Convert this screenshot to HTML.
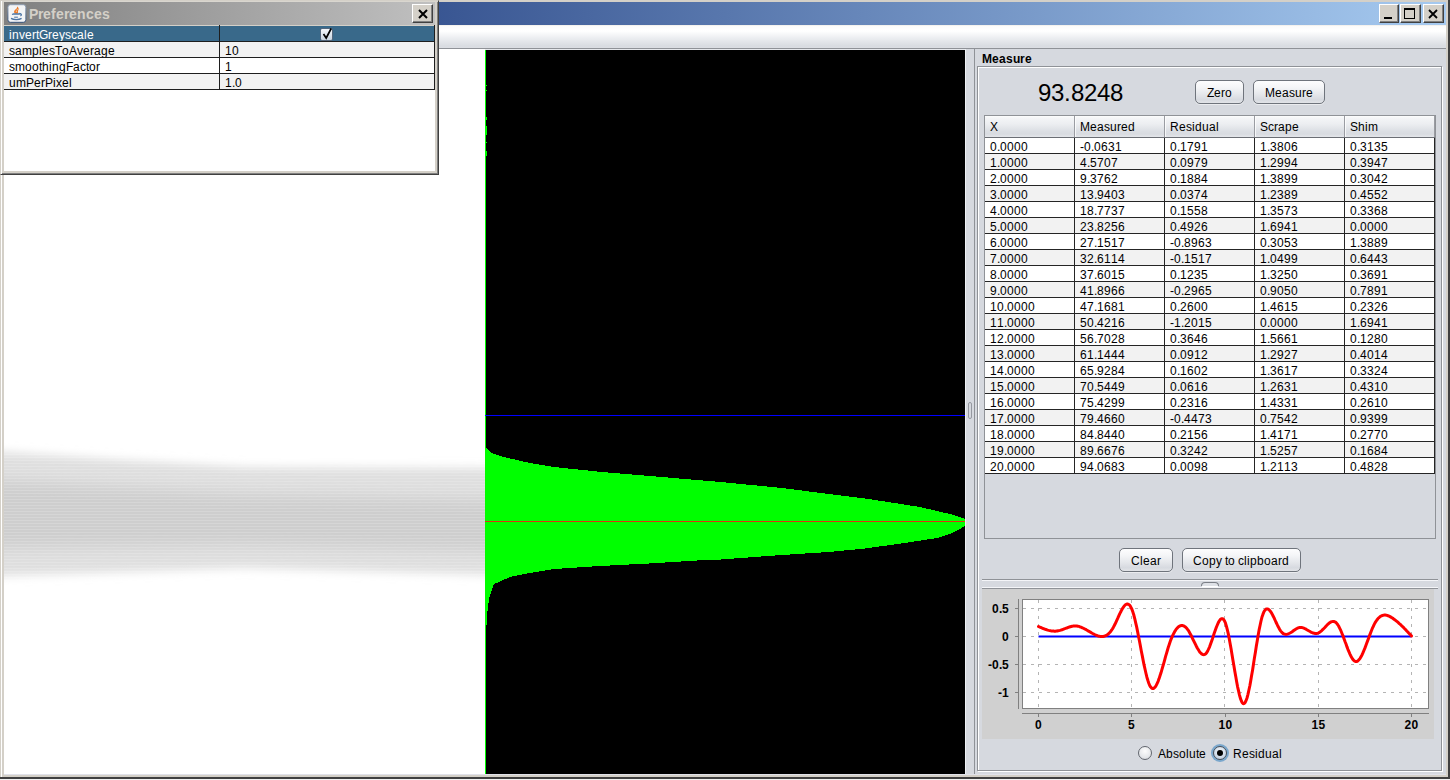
<!DOCTYPE html>
<html><head><meta charset="utf-8">
<style>
*{box-sizing:border-box;margin:0;padding:0}
html,body{width:1450px;height:780px;overflow:hidden}
body{position:relative;background:#d4d0c8;font-family:"Liberation Sans",sans-serif;font-size:12px;color:#000}
.a{position:absolute}
/* main window */
#mtitle{left:4px;top:2px;width:1442px;height:23px;background:linear-gradient(to right,#0a246a,#a6caf0)}
.wbtn{position:absolute;top:2px;width:16px;height:19px;background:#d4d0c8;border-top:1px solid #fff;border-left:1px solid #fff;border-right:1px solid #404040;border-bottom:1px solid #404040;box-shadow:inset -1px -1px 0 #808080}
#menubar{left:4px;top:25px;width:1442px;height:24px;background:linear-gradient(to bottom,#ece8e1 0px,#fbfbfb 1px,#ffffff 6px,#eceef1 13px,#d9dce1 21px,#dcdee3 23px);border-bottom:1px solid #8f9297}
#leftimg{left:4px;top:49px;width:481px;height:725px;background:#fff;overflow:hidden}
#blackp{left:485px;top:50px;width:480px;height:724px;background:#000;overflow:hidden}
#split{left:965px;top:49px;width:10px;height:725px;background:#d6d9df;border-left:1px solid #eef0f4;border-right:1px solid #8f9297}
#rightp{left:975px;top:49px;width:471px;height:725px;background:#d6d9df}
.tb{position:absolute;white-space:nowrap}
/* nimbus button */
.btn{position:absolute;border:1px solid #6f747c;border-radius:5px;background:linear-gradient(to bottom,#fdfdfe 0%,#f4f5f7 30%,#e6e8ec 58%,#d7dae0 85%,#e2e4e8 100%);text-align:center;font-size:12px;color:#000;box-shadow:0 1px 0 rgba(255,255,255,.5)}
/* table */
.tr{position:absolute;left:985px;width:449px;height:16px;border-bottom:1px solid #252525}
.tr span{position:absolute;top:1px;line-height:13px;font-size:12px}
.hdr span{position:absolute;top:4px;font-size:12px}
/* prefs */
#dlg{left:0;top:0;width:439px;height:175px;background:#d4d0c8;border-top:1px solid #d4d0c8;border-left:1px solid #d4d0c8;border-right:1px solid #404040;border-bottom:1px solid #404040;box-shadow:inset 1px 0 0 #fff,inset 0 1px 0 #d9d6cf,inset -1px -1px 0 #808080}
.prow{position:absolute;left:4px;width:431px;height:16px;border-bottom:1px solid #1e1e1e;font-size:12px}
.prow span{position:absolute;top:1px;line-height:13px}
</style></head>
<body>
<!-- main window frame -->
<div class="a" style="left:0;top:0;width:1450px;height:780px;background:#d4d0c8"></div>
<div class="a" style="left:1px;top:1px;width:1px;height:777px;background:#fff"></div>
<div class="a" style="left:1448px;top:0;width:2px;height:780px;background:#404040"></div>
<div class="a" style="left:0;top:777px;width:1450px;height:2px;background:#404040"></div>
<div class="a" style="left:0;top:779px;width:1450px;height:1px;background:#f0f0f0"></div>
<div id="mtitle" class="a">
  <div class="wbtn" style="left:1375px;width:20px"><div class="a" style="left:4px;top:12px;width:8px;height:2px;background:#000"></div></div>
  <div class="wbtn" style="left:1396px;width:21px"><div class="a" style="left:3px;top:3px;width:11px;height:11px;border:1px solid #000;border-top-width:2px"></div></div>
  <div class="wbtn" style="left:1419px;width:21px"><svg class="a" style="left:4px;top:4px" width="10" height="10" viewBox="0 0 10 10"><path d="M1 1L9 9M9 1L1 9" stroke="#000" stroke-width="1.8"/></svg></div>
</div>
<div id="menubar" class="a"></div>

<!-- left image -->
<div id="leftimg" class="a"><svg class="a" style="left:0;top:0" width="481" height="725"><defs><filter id="bl1" x="-20%" y="-50%" width="140%" height="200%"><feGaussianBlur stdDeviation="5"/></filter><filter id="bl2" x="-20%" y="-50%" width="140%" height="200%"><feGaussianBlur stdDeviation="8"/></filter><pattern id="stp" width="8" height="3" patternUnits="userSpaceOnUse"><rect width="8" height="1" fill="#fff" fill-opacity=".16"/></pattern></defs><polygon points="-40,401 0,403 120,411 240,418 520,419 520,527 240,519 0,527 -40,529" fill="#dfdfdf" filter="url(#bl1)"/><polygon points="-40,429 0,431 240,445 520,451 520,503 240,496 0,499 -40,501" fill="#cecece" filter="url(#bl2)"/><rect x="0" y="403" width="481" height="140" fill="url(#stp)"/></svg></div>

<!-- black profile panel -->
<div id="blackp" class="a">
  <svg class="a" style="left:0;top:0" width="480" height="724" viewBox="485 50 480 724">
    <polygon points="485,446 487,449 492,453 500,456 508,458 530,463 554,467 602,472 650,476 697,480 721,482 782,488 829,494 865,498.5 885,501.5 901,504 920,507 937,511 950,514 960,517 965,519 966,521 966,522 965,526 960,529 950,534 937,538 901,543.5 865,548.5 829,552 782,555 721,559.5 697,560.5 649,563.5 600,566 554,569 524,574 510,577 499,582 494,584 491,592 489,599 487.5,611 486.5,625 486,640 485,650 485,774" fill="#00ff00" shape-rendering="crispEdges"/><g fill="#00ff00"><rect x="486" y="85" width="1" height="1"/><rect x="486" y="90" width="1" height="1"/><rect x="486" y="117" width="1" height="3"/><rect x="486" y="126" width="1" height="9"/><rect x="486" y="142" width="1" height="1"/><rect x="486" y="151" width="1" height="5"/></g>
    <rect x="485" y="50" width="1" height="724" fill="#00ff00"/>
    <rect x="485" y="415" width="480" height="1" fill="#0000ff"/>
    <rect x="485" y="521" width="480" height="1" fill="#e03010"/>
  </svg>
</div>

<div class="a" style="left:4px;top:774px;width:1442px;height:1px;background:#e1e2ea"></div>
<div class="a" style="left:485px;top:49px;width:480px;height:1px;background:#e6e8ec"></div>
<!-- splitter -->
<div id="split" class="a"></div>
<div class="a" style="left:968px;top:402px;width:4px;height:17px;border:1px solid #9598a0;border-radius:2px"></div>

<!-- right panel -->
<div id="rightp" class="a"></div>
<div class="a" style="left:978px;top:67px;width:465px;height:705px;border:1px solid #fff"></div>
<div class="a" style="left:977px;top:66px;width:465px;height:705px;border:1px solid #8f9297"></div>

<div class="btn" style="left:1195px;top:80px;width:49px;height:24px;line-height:22px"></div>
<div class="btn" style="left:1253px;top:80px;width:72px;height:24px;line-height:22px"></div>

<!-- table scrollpane -->
<div class="a" style="left:984px;top:115px;width:452px;height:424px;border:1px solid #8f9297;background:#d6d9df"></div>
<div class="a hdr" style="left:985px;top:116px;width:450px;height:22px;background:linear-gradient(to bottom,#fdfdfd 0px,#f4f5f7 2px,#eceef1 8px,#dcdfe4 15px,#d8dbe0 18px,#e4e6ea 21px);border-bottom:1px solid #6b6e74">
  
  <div class="a" style="left:89px;top:0;width:1px;height:21px;background:#9a9ca2"></div><div class="a" style="left:90px;top:0;width:1px;height:21px;background:rgba(255,255,255,.75)"></div>
  <div class="a" style="left:179px;top:0;width:1px;height:21px;background:#9a9ca2"></div><div class="a" style="left:180px;top:0;width:1px;height:21px;background:rgba(255,255,255,.75)"></div>
  <div class="a" style="left:269px;top:0;width:1px;height:21px;background:#9a9ca2"></div><div class="a" style="left:270px;top:0;width:1px;height:21px;background:rgba(255,255,255,.75)"></div>
  <div class="a" style="left:359px;top:0;width:1px;height:21px;background:#9a9ca2"></div><div class="a" style="left:360px;top:0;width:1px;height:21px;background:rgba(255,255,255,.75)"></div>
  <div class="a" style="left:449px;top:0;width:1px;height:21px;background:#9a9ca2"></div>
</div>
<div class="tr" style="top:138px;background:#ffffff"></div>
<div class="tr" style="top:154px;background:#f2f2f2"></div>
<div class="tr" style="top:170px;background:#ffffff"></div>
<div class="tr" style="top:186px;background:#f2f2f2"></div>
<div class="tr" style="top:202px;background:#ffffff"></div>
<div class="tr" style="top:218px;background:#f2f2f2"></div>
<div class="tr" style="top:234px;background:#ffffff"></div>
<div class="tr" style="top:250px;background:#f2f2f2"></div>
<div class="tr" style="top:266px;background:#ffffff"></div>
<div class="tr" style="top:282px;background:#f2f2f2"></div>
<div class="tr" style="top:298px;background:#ffffff"></div>
<div class="tr" style="top:314px;background:#f2f2f2"></div>
<div class="tr" style="top:330px;background:#ffffff"></div>
<div class="tr" style="top:346px;background:#f2f2f2"></div>
<div class="tr" style="top:362px;background:#ffffff"></div>
<div class="tr" style="top:378px;background:#f2f2f2"></div>
<div class="tr" style="top:394px;background:#ffffff"></div>
<div class="tr" style="top:410px;background:#f2f2f2"></div>
<div class="tr" style="top:426px;background:#ffffff"></div>
<div class="tr" style="top:442px;background:#f2f2f2"></div>
<div class="tr" style="top:458px;background:#ffffff"></div>
<div class="a" style="left:1074px;top:138px;width:1px;height:336px;background:#252525"></div>
<div class="a" style="left:1164px;top:138px;width:1px;height:336px;background:#252525"></div>
<div class="a" style="left:1254px;top:138px;width:1px;height:336px;background:#252525"></div>
<div class="a" style="left:1344px;top:138px;width:1px;height:336px;background:#252525"></div>
<div class="a" style="left:1434px;top:138px;width:1px;height:336px;background:#252525"></div>

<div class="btn" style="left:1119px;top:548px;width:54px;height:24px;line-height:22px"></div>
<div class="btn" style="left:1182px;top:548px;width:119px;height:24px;line-height:22px"></div>

<!-- split divider -->
<div class="a" style="left:982px;top:579px;width:456px;height:1px;background:#8f9297"></div>
<div class="a" style="left:982px;top:580px;width:456px;height:1px;background:#f4f5f8"></div>
<div class="a" style="left:1201px;top:582px;width:18px;height:4px;border:1px solid #7b7f86;border-bottom:none;border-radius:4px 4px 0 0;background:#dfe2e7"></div><div class="a" style="left:1202px;top:586px;width:16px;height:1px;background:#fff"></div>
<div class="a" style="left:982px;top:587px;width:456px;height:1px;background:#f4f5f8"></div>
<div class="a" style="left:982px;top:588px;width:456px;height:1px;background:#8f9297"></div>
<!-- chart -->
<div class="a" style="left:982px;top:589px;width:452px;height:150px;background:#d0d0d0"></div>
<svg class="a" style="left:975px;top:585px" width="470" height="160" viewBox="975 585 470 160"><rect x="1022.5" y="599.5" width="406" height="109" fill="#fff" stroke="#808080" stroke-width="1"/><g stroke="#b4b4b4" stroke-width="1" stroke-dasharray="3,5"><line x1="1023" y1="608.5" x2="1428" y2="608.5"/><line x1="1023" y1="636.5" x2="1428" y2="636.5"/><line x1="1023" y1="664.5" x2="1428" y2="664.5"/><line x1="1023" y1="692.5" x2="1428" y2="692.5"/><line x1="1038.5" y1="600" x2="1038.5" y2="708"/><line x1="1131.5" y1="600" x2="1131.5" y2="708"/><line x1="1224.5" y1="600" x2="1224.5" y2="708"/><line x1="1318.5" y1="600" x2="1318.5" y2="708"/><line x1="1411.5" y1="600" x2="1411.5" y2="708"/></g><g stroke="#808080" stroke-width="1"><line x1="1018.5" y1="599" x2="1018.5" y2="709"/><line x1="1015" y1="608.5" x2="1018" y2="608.5"/><line x1="1015" y1="636.5" x2="1018" y2="636.5"/><line x1="1015" y1="664.5" x2="1018" y2="664.5"/><line x1="1015" y1="692.5" x2="1018" y2="692.5"/><line x1="1022" y1="713.5" x2="1429" y2="713.5"/><line x1="1038.5" y1="714" x2="1038.5" y2="717"/><line x1="1131.5" y1="714" x2="1131.5" y2="717"/><line x1="1225.5" y1="714" x2="1225.5" y2="717"/><line x1="1318.5" y1="714" x2="1318.5" y2="717"/><line x1="1411.5" y1="714" x2="1411.5" y2="717"/></g><line x1="1038.5" y1="636.5" x2="1411.5" y2="636.5" stroke="#0000ff" stroke-width="2.2"/><path d="M1038.5,626.5 L1039.4,626.9 L1040.4,627.3 L1041.3,627.7 L1042.2,628.1 L1043.2,628.5 L1044.1,628.8 L1045.0,629.2 L1046.0,629.5 L1046.9,629.8 L1047.8,630.1 L1048.8,630.4 L1049.7,630.6 L1050.7,630.8 L1051.6,630.9 L1052.5,631.1 L1053.5,631.1 L1054.4,631.2 L1055.3,631.2 L1056.3,631.1 L1057.2,631.0 L1058.1,630.8 L1059.1,630.6 L1060.0,630.4 L1060.9,630.1 L1061.9,629.8 L1062.8,629.5 L1063.7,629.1 L1064.7,628.7 L1065.6,628.4 L1066.5,628.0 L1067.5,627.7 L1068.4,627.3 L1069.3,627.0 L1070.3,626.7 L1071.2,626.5 L1072.2,626.3 L1073.1,626.1 L1074.0,626.0 L1075.0,625.9 L1075.9,626.0 L1076.8,626.0 L1077.8,626.2 L1078.7,626.4 L1079.6,626.7 L1080.6,627.0 L1081.5,627.4 L1082.4,627.8 L1083.4,628.2 L1084.3,628.7 L1085.2,629.2 L1086.2,629.7 L1087.1,630.2 L1088.0,630.8 L1089.0,631.3 L1089.9,631.9 L1090.9,632.4 L1091.8,633.0 L1092.7,633.5 L1093.7,634.0 L1094.6,634.5 L1095.5,634.9 L1096.5,635.3 L1097.4,635.7 L1098.3,636.0 L1099.3,636.2 L1100.2,636.4 L1101.1,636.5 L1102.1,636.5 L1103.0,636.5 L1103.9,636.3 L1104.9,636.0 L1105.8,635.6 L1106.7,635.1 L1107.7,634.5 L1108.6,633.7 L1109.5,632.8 L1110.5,631.7 L1111.4,630.4 L1112.4,629.0 L1113.3,627.4 L1114.2,625.7 L1115.2,623.8 L1116.1,621.8 L1117.0,619.8 L1118.0,617.7 L1118.9,615.6 L1119.8,613.6 L1120.8,611.7 L1121.7,609.9 L1122.6,608.3 L1123.6,606.9 L1124.5,605.7 L1125.4,604.8 L1126.4,604.2 L1127.3,604.0 L1128.2,604.2 L1129.2,604.8 L1130.1,605.8 L1131.0,607.4 L1132.0,609.5 L1132.9,612.1 L1133.9,615.3 L1134.8,618.9 L1135.7,622.8 L1136.7,627.1 L1137.6,631.6 L1138.5,636.3 L1139.5,641.2 L1140.4,646.1 L1141.3,651.0 L1142.3,655.9 L1143.2,660.6 L1144.1,665.2 L1145.1,669.5 L1146.0,673.5 L1146.9,677.2 L1147.9,680.5 L1148.8,683.2 L1149.7,685.5 L1150.7,687.1 L1151.6,688.1 L1152.6,688.5 L1153.5,688.4 L1154.4,687.8 L1155.4,686.7 L1156.3,685.2 L1157.2,683.3 L1158.2,681.1 L1159.1,678.6 L1160.0,675.8 L1161.0,672.8 L1161.9,669.7 L1162.8,666.5 L1163.8,663.1 L1164.7,659.8 L1165.6,656.4 L1166.6,653.1 L1167.5,650.0 L1168.4,646.9 L1169.4,644.0 L1170.3,641.3 L1171.2,638.9 L1172.2,636.6 L1173.1,634.6 L1174.1,632.7 L1175.0,631.1 L1175.9,629.7 L1176.9,628.4 L1177.8,627.4 L1178.7,626.6 L1179.7,626.1 L1180.6,625.7 L1181.5,625.5 L1182.5,625.5 L1183.4,625.8 L1184.3,626.2 L1185.3,626.9 L1186.2,627.8 L1187.1,628.8 L1188.1,630.1 L1189.0,631.6 L1189.9,633.2 L1190.9,635.0 L1191.8,636.9 L1192.7,638.8 L1193.7,640.8 L1194.6,642.7 L1195.6,644.7 L1196.5,646.5 L1197.4,648.2 L1198.4,649.8 L1199.3,651.3 L1200.2,652.5 L1201.2,653.5 L1202.1,654.2 L1203.0,654.6 L1204.0,654.7 L1204.9,654.4 L1205.8,653.7 L1206.8,652.5 L1207.7,651.0 L1208.6,649.0 L1209.6,646.8 L1210.5,644.3 L1211.4,641.7 L1212.4,638.9 L1213.3,636.1 L1214.2,633.3 L1215.2,630.5 L1216.1,627.9 L1217.1,625.5 L1218.0,623.4 L1218.9,621.5 L1219.9,620.1 L1220.8,619.1 L1221.7,618.7 L1222.7,618.8 L1223.6,619.5 L1224.5,620.9 L1225.5,623.1 L1226.4,626.1 L1227.3,629.7 L1228.3,633.9 L1229.2,638.5 L1230.1,643.5 L1231.1,648.9 L1232.0,654.4 L1232.9,660.0 L1233.9,665.7 L1234.8,671.3 L1235.8,676.8 L1236.7,681.9 L1237.6,686.8 L1238.6,691.2 L1239.5,695.1 L1240.4,698.4 L1241.4,701.0 L1242.3,702.8 L1243.2,703.7 L1244.2,703.6 L1245.1,702.6 L1246.0,700.7 L1247.0,698.0 L1247.9,694.6 L1248.8,690.5 L1249.8,686.0 L1250.7,680.9 L1251.6,675.6 L1252.6,669.9 L1253.5,664.1 L1254.4,658.1 L1255.4,652.2 L1256.3,646.3 L1257.3,640.5 L1258.2,635.1 L1259.1,629.9 L1260.1,625.2 L1261.0,621.0 L1261.9,617.3 L1262.9,614.4 L1263.8,612.1 L1264.7,610.5 L1265.7,609.4 L1266.6,608.9 L1267.5,608.9 L1268.5,609.3 L1269.4,610.1 L1270.3,611.2 L1271.3,612.6 L1272.2,614.2 L1273.1,616.0 L1274.1,617.9 L1275.0,620.0 L1275.9,622.0 L1276.9,624.0 L1277.8,626.0 L1278.8,627.8 L1279.7,629.5 L1280.6,630.9 L1281.6,632.1 L1282.5,633.0 L1283.4,633.7 L1284.4,634.1 L1285.3,634.3 L1286.2,634.4 L1287.2,634.2 L1288.1,633.9 L1289.0,633.5 L1290.0,633.0 L1290.9,632.5 L1291.8,631.9 L1292.8,631.2 L1293.7,630.5 L1294.6,629.9 L1295.6,629.3 L1296.5,628.7 L1297.4,628.2 L1298.4,627.8 L1299.3,627.6 L1300.3,627.5 L1301.2,627.5 L1302.1,627.6 L1303.1,627.9 L1304.0,628.2 L1304.9,628.7 L1305.9,629.1 L1306.8,629.7 L1307.7,630.2 L1308.7,630.8 L1309.6,631.3 L1310.5,631.8 L1311.5,632.3 L1312.4,632.7 L1313.3,633.1 L1314.3,633.3 L1315.2,633.5 L1316.1,633.5 L1317.1,633.4 L1318.0,633.1 L1319.0,632.7 L1319.9,632.1 L1320.8,631.4 L1321.8,630.6 L1322.7,629.6 L1323.6,628.7 L1324.6,627.7 L1325.5,626.7 L1326.4,625.7 L1327.4,624.7 L1328.3,623.9 L1329.2,623.1 L1330.2,622.4 L1331.1,621.9 L1332.0,621.6 L1333.0,621.4 L1333.9,621.5 L1334.8,621.8 L1335.8,622.4 L1336.7,623.3 L1337.6,624.5 L1338.6,626.0 L1339.5,627.8 L1340.5,629.8 L1341.4,632.0 L1342.3,634.3 L1343.3,636.7 L1344.2,639.3 L1345.1,641.8 L1346.1,644.3 L1347.0,646.9 L1347.9,649.3 L1348.9,651.6 L1349.8,653.8 L1350.7,655.7 L1351.7,657.5 L1352.6,659.0 L1353.5,660.2 L1354.5,661.0 L1355.4,661.5 L1356.3,661.6 L1357.3,661.3 L1358.2,660.6 L1359.1,659.6 L1360.1,658.3 L1361.0,656.7 L1362.0,654.9 L1362.9,652.9 L1363.8,650.7 L1364.8,648.4 L1365.7,646.0 L1366.6,643.5 L1367.6,640.9 L1368.5,638.4 L1369.4,635.9 L1370.4,633.4 L1371.3,631.0 L1372.2,628.7 L1373.2,626.6 L1374.1,624.6 L1375.0,622.9 L1376.0,621.3 L1376.9,620.0 L1377.8,618.8 L1378.8,617.8 L1379.7,617.0 L1380.7,616.3 L1381.6,615.8 L1382.5,615.4 L1383.5,615.2 L1384.4,615.1 L1385.3,615.1 L1386.3,615.2 L1387.2,615.4 L1388.1,615.8 L1389.1,616.1 L1390.0,616.6 L1390.9,617.1 L1391.9,617.7 L1392.8,618.3 L1393.7,619.0 L1394.7,619.7 L1395.6,620.4 L1396.5,621.1 L1397.5,621.9 L1398.4,622.7 L1399.3,623.6 L1400.3,624.4 L1401.2,625.3 L1402.2,626.2 L1403.1,627.1 L1404.0,628.1 L1405.0,629.0 L1405.9,630.0 L1406.8,631.0 L1407.8,632.0 L1408.7,633.0 L1409.6,633.9 L1410.6,634.9 L1411.5,636.0" fill="none" stroke="#ff0000" stroke-width="3" stroke-linejoin="round" stroke-linecap="round"/></svg>

<!-- radios -->
<div class="a" style="left:1138px;top:746px;width:14px;height:14px;border-radius:50%;border:1px solid #62666e;background:radial-gradient(circle at 50% 35%,#fdfdfd,#e6e8eb 60%,#d0d3d8)"></div>
<div class="a" style="left:1211px;top:744px;width:18px;height:18px;border-radius:50%;background:#7aa7cc"></div>
<div class="a" style="left:1213px;top:746px;width:14px;height:14px;border-radius:50%;border:1px solid #4a4f58;background:radial-gradient(circle at 50% 35%,#f2f5f9,#cfdbe8 60%,#b8c9dc)"></div>
<div class="a" style="left:1217px;top:750px;width:6px;height:6px;border-radius:50%;background:#000"></div>

<!-- preferences dialog -->
<div id="dlg" class="a">
  <div class="a" style="left:3px;top:1px;width:431px;height:23px;background:linear-gradient(to right,#808080,#c0c0c0)"></div>
  <svg class="a" style="left:0;top:0" width="30" height="26" viewBox="0 0 30 26">
    <defs><linearGradient id="ibd" x1="0" y1="0" x2="0" y2="1"><stop offset="0" stop-color="#8d9cb0"/><stop offset="1" stop-color="#34527a"/></linearGradient></defs>
    <rect x="6.9" y="3.7" width="18" height="17.6" rx="2.5" fill="#f3f4f6" stroke="url(#ibd)" stroke-width="1"/>
    <path d="M16 5.6C17.6 6.6 18.2 8.2 17.2 9.4C16.6 10.1 17.4 11 17 12.2C16.4 12.8 14.4 12.9 13.6 12.2C12.6 11.2 13 9.8 14.2 8.8C15.2 8 16.4 7.2 16 5.6Z" fill="#ec7d2c"/><circle cx="15.4" cy="10.2" r=".6" fill="#f8d6b8"/><circle cx="16.2" cy="8.6" r=".5" fill="#f8d6b8"/>
    <path d="M11 13.5L12.6 13.0L18.6 13.0M18.4 12.5C20.6 12.6 21 14.2 19.4 14.8" fill="none" stroke="#4a73a3" stroke-width="1.3"/>
    <path d="M13.2 16.2L16.9 16.2" stroke="#4a73a3" stroke-width="1"/>
    <path d="M10 17.4C12.5 18.9 18 18.9 20.6 17.4" fill="none" stroke="#4a73a3" stroke-width="1.3"/>
  </svg>
    <div class="wbtn" style="left:411px;top:3px;width:21px;height:19px"></div>
  <svg class="a" style="left:417px;top:8px" width="10" height="10" viewBox="0 0 10 10"><path d="M1 1L9 9M9 1L1 9" stroke="#000" stroke-width="2"/></svg>
  <div class="a" style="left:3px;top:25px;width:431px;height:145px;background:#fff"></div>
</div>
<div class="prow" style="top:26px;background:#39698a;color:#fff"></div>
<div class="prow" style="top:42px;background:#f2f2f2"></div>
<div class="prow" style="top:58px;background:#fff"></div>
<div class="prow" style="top:74px;background:#f2f2f2"></div>
<div class="a" style="left:219px;top:25px;width:1px;height:65px;background:#1e1e1e"></div>
<div class="a" style="left:434px;top:25px;width:1px;height:65px;background:#1e1e1e"></div>
<div class="a" style="left:320px;top:28px;width:13px;height:13px;border-radius:2px;border:1px solid #55677c;background:linear-gradient(#f6f8fb,#c6d2df)"></div>
<svg class="a" style="left:321px;top:27px" width="12" height="13" viewBox="0 0 12 13"><path d="M2.5 7L5.2 11L10.2 1.5" fill="none" stroke="#000" stroke-width="1.7"/></svg>
<svg class="a" style="left:0;top:0;pointer-events:none" width="1450" height="780" font-family="Liberation Sans"><text x="990 997 1000 1007 1014 1021" y="151" font-size="12" fill="#000">0.0000</text><text x="1080 1084 1091 1094 1101 1108 1115" y="151" font-size="12" fill="#000">-0.0631</text><text x="1170 1177 1180 1187 1194 1201" y="151" font-size="12" fill="#000">0.1791</text><text x="1260 1267 1270 1277 1284 1291" y="151" font-size="12" fill="#000">1.3806</text><text x="1350 1357 1360 1367 1374 1381" y="151" font-size="12" fill="#000">0.3135</text><text x="990 997 1000 1007 1014 1021" y="167" font-size="12" fill="#000">1.0000</text><text x="1080 1087 1090 1097 1104 1111" y="167" font-size="12" fill="#000">4.5707</text><text x="1170 1177 1180 1187 1194 1201" y="167" font-size="12" fill="#000">0.0979</text><text x="1260 1267 1270 1277 1284 1291" y="167" font-size="12" fill="#000">1.2994</text><text x="1350 1357 1360 1367 1374 1381" y="167" font-size="12" fill="#000">0.3947</text><text x="990 997 1000 1007 1014 1021" y="183" font-size="12" fill="#000">2.0000</text><text x="1080 1087 1090 1097 1104 1111" y="183" font-size="12" fill="#000">9.3762</text><text x="1170 1177 1180 1187 1194 1201" y="183" font-size="12" fill="#000">0.1884</text><text x="1260 1267 1270 1277 1284 1291" y="183" font-size="12" fill="#000">1.3899</text><text x="1350 1357 1360 1367 1374 1381" y="183" font-size="12" fill="#000">0.3042</text><text x="990 997 1000 1007 1014 1021" y="199" font-size="12" fill="#000">3.0000</text><text x="1080 1087 1094 1097 1104 1111 1118" y="199" font-size="12" fill="#000">13.9403</text><text x="1170 1177 1180 1187 1194 1201" y="199" font-size="12" fill="#000">0.0374</text><text x="1260 1267 1270 1277 1284 1291" y="199" font-size="12" fill="#000">1.2389</text><text x="1350 1357 1360 1367 1374 1381" y="199" font-size="12" fill="#000">0.4552</text><text x="990 997 1000 1007 1014 1021" y="215" font-size="12" fill="#000">4.0000</text><text x="1080 1087 1094 1097 1104 1111 1118" y="215" font-size="12" fill="#000">18.7737</text><text x="1170 1177 1180 1187 1194 1201" y="215" font-size="12" fill="#000">0.1558</text><text x="1260 1267 1270 1277 1284 1291" y="215" font-size="12" fill="#000">1.3573</text><text x="1350 1357 1360 1367 1374 1381" y="215" font-size="12" fill="#000">0.3368</text><text x="990 997 1000 1007 1014 1021" y="231" font-size="12" fill="#000">5.0000</text><text x="1080 1087 1094 1097 1104 1111 1118" y="231" font-size="12" fill="#000">23.8256</text><text x="1170 1177 1180 1187 1194 1201" y="231" font-size="12" fill="#000">0.4926</text><text x="1260 1267 1270 1277 1284 1291" y="231" font-size="12" fill="#000">1.6941</text><text x="1350 1357 1360 1367 1374 1381" y="231" font-size="12" fill="#000">0.0000</text><text x="990 997 1000 1007 1014 1021" y="247" font-size="12" fill="#000">6.0000</text><text x="1080 1087 1094 1097 1104 1111 1118" y="247" font-size="12" fill="#000">27.1517</text><text x="1170 1174 1181 1184 1191 1198 1205" y="247" font-size="12" fill="#000">-0.8963</text><text x="1260 1267 1270 1277 1284 1291" y="247" font-size="12" fill="#000">0.3053</text><text x="1350 1357 1360 1367 1374 1381" y="247" font-size="12" fill="#000">1.3889</text><text x="990 997 1000 1007 1014 1021" y="263" font-size="12" fill="#000">7.0000</text><text x="1080 1087 1094 1097 1104 1111 1118" y="263" font-size="12" fill="#000">32.6114</text><text x="1170 1174 1181 1184 1191 1198 1205" y="263" font-size="12" fill="#000">-0.1517</text><text x="1260 1267 1270 1277 1284 1291" y="263" font-size="12" fill="#000">1.0499</text><text x="1350 1357 1360 1367 1374 1381" y="263" font-size="12" fill="#000">0.6443</text><text x="990 997 1000 1007 1014 1021" y="279" font-size="12" fill="#000">8.0000</text><text x="1080 1087 1094 1097 1104 1111 1118" y="279" font-size="12" fill="#000">37.6015</text><text x="1170 1177 1180 1187 1194 1201" y="279" font-size="12" fill="#000">0.1235</text><text x="1260 1267 1270 1277 1284 1291" y="279" font-size="12" fill="#000">1.3250</text><text x="1350 1357 1360 1367 1374 1381" y="279" font-size="12" fill="#000">0.3691</text><text x="990 997 1000 1007 1014 1021" y="295" font-size="12" fill="#000">9.0000</text><text x="1080 1087 1094 1097 1104 1111 1118" y="295" font-size="12" fill="#000">41.8966</text><text x="1170 1174 1181 1184 1191 1198 1205" y="295" font-size="12" fill="#000">-0.2965</text><text x="1260 1267 1270 1277 1284 1291" y="295" font-size="12" fill="#000">0.9050</text><text x="1350 1357 1360 1367 1374 1381" y="295" font-size="12" fill="#000">0.7891</text><text x="990 997 1004 1007 1014 1021 1028" y="311" font-size="12" fill="#000">10.0000</text><text x="1080 1087 1094 1097 1104 1111 1118" y="311" font-size="12" fill="#000">47.1681</text><text x="1170 1177 1180 1187 1194 1201" y="311" font-size="12" fill="#000">0.2600</text><text x="1260 1267 1270 1277 1284 1291" y="311" font-size="12" fill="#000">1.4615</text><text x="1350 1357 1360 1367 1374 1381" y="311" font-size="12" fill="#000">0.2326</text><text x="990 997 1004 1007 1014 1021 1028" y="327" font-size="12" fill="#000">11.0000</text><text x="1080 1087 1094 1097 1104 1111 1118" y="327" font-size="12" fill="#000">50.4216</text><text x="1170 1174 1181 1184 1191 1198 1205" y="327" font-size="12" fill="#000">-1.2015</text><text x="1260 1267 1270 1277 1284 1291" y="327" font-size="12" fill="#000">0.0000</text><text x="1350 1357 1360 1367 1374 1381" y="327" font-size="12" fill="#000">1.6941</text><text x="990 997 1004 1007 1014 1021 1028" y="343" font-size="12" fill="#000">12.0000</text><text x="1080 1087 1094 1097 1104 1111 1118" y="343" font-size="12" fill="#000">56.7028</text><text x="1170 1177 1180 1187 1194 1201" y="343" font-size="12" fill="#000">0.3646</text><text x="1260 1267 1270 1277 1284 1291" y="343" font-size="12" fill="#000">1.5661</text><text x="1350 1357 1360 1367 1374 1381" y="343" font-size="12" fill="#000">0.1280</text><text x="990 997 1004 1007 1014 1021 1028" y="359" font-size="12" fill="#000">13.0000</text><text x="1080 1087 1094 1097 1104 1111 1118" y="359" font-size="12" fill="#000">61.1444</text><text x="1170 1177 1180 1187 1194 1201" y="359" font-size="12" fill="#000">0.0912</text><text x="1260 1267 1270 1277 1284 1291" y="359" font-size="12" fill="#000">1.2927</text><text x="1350 1357 1360 1367 1374 1381" y="359" font-size="12" fill="#000">0.4014</text><text x="990 997 1004 1007 1014 1021 1028" y="375" font-size="12" fill="#000">14.0000</text><text x="1080 1087 1094 1097 1104 1111 1118" y="375" font-size="12" fill="#000">65.9284</text><text x="1170 1177 1180 1187 1194 1201" y="375" font-size="12" fill="#000">0.1602</text><text x="1260 1267 1270 1277 1284 1291" y="375" font-size="12" fill="#000">1.3617</text><text x="1350 1357 1360 1367 1374 1381" y="375" font-size="12" fill="#000">0.3324</text><text x="990 997 1004 1007 1014 1021 1028" y="391" font-size="12" fill="#000">15.0000</text><text x="1080 1087 1094 1097 1104 1111 1118" y="391" font-size="12" fill="#000">70.5449</text><text x="1170 1177 1180 1187 1194 1201" y="391" font-size="12" fill="#000">0.0616</text><text x="1260 1267 1270 1277 1284 1291" y="391" font-size="12" fill="#000">1.2631</text><text x="1350 1357 1360 1367 1374 1381" y="391" font-size="12" fill="#000">0.4310</text><text x="990 997 1004 1007 1014 1021 1028" y="407" font-size="12" fill="#000">16.0000</text><text x="1080 1087 1094 1097 1104 1111 1118" y="407" font-size="12" fill="#000">75.4299</text><text x="1170 1177 1180 1187 1194 1201" y="407" font-size="12" fill="#000">0.2316</text><text x="1260 1267 1270 1277 1284 1291" y="407" font-size="12" fill="#000">1.4331</text><text x="1350 1357 1360 1367 1374 1381" y="407" font-size="12" fill="#000">0.2610</text><text x="990 997 1004 1007 1014 1021 1028" y="423" font-size="12" fill="#000">17.0000</text><text x="1080 1087 1094 1097 1104 1111 1118" y="423" font-size="12" fill="#000">79.4660</text><text x="1170 1174 1181 1184 1191 1198 1205" y="423" font-size="12" fill="#000">-0.4473</text><text x="1260 1267 1270 1277 1284 1291" y="423" font-size="12" fill="#000">0.7542</text><text x="1350 1357 1360 1367 1374 1381" y="423" font-size="12" fill="#000">0.9399</text><text x="990 997 1004 1007 1014 1021 1028" y="439" font-size="12" fill="#000">18.0000</text><text x="1080 1087 1094 1097 1104 1111 1118" y="439" font-size="12" fill="#000">84.8440</text><text x="1170 1177 1180 1187 1194 1201" y="439" font-size="12" fill="#000">0.2156</text><text x="1260 1267 1270 1277 1284 1291" y="439" font-size="12" fill="#000">1.4171</text><text x="1350 1357 1360 1367 1374 1381" y="439" font-size="12" fill="#000">0.2770</text><text x="990 997 1004 1007 1014 1021 1028" y="455" font-size="12" fill="#000">19.0000</text><text x="1080 1087 1094 1097 1104 1111 1118" y="455" font-size="12" fill="#000">89.6676</text><text x="1170 1177 1180 1187 1194 1201" y="455" font-size="12" fill="#000">0.3242</text><text x="1260 1267 1270 1277 1284 1291" y="455" font-size="12" fill="#000">1.5257</text><text x="1350 1357 1360 1367 1374 1381" y="455" font-size="12" fill="#000">0.1684</text><text x="990 997 1004 1007 1014 1021 1028" y="471" font-size="12" fill="#000">20.0000</text><text x="1080 1087 1094 1097 1104 1111 1118" y="471" font-size="12" fill="#000">94.0683</text><text x="1170 1177 1180 1187 1194 1201" y="471" font-size="12" fill="#000">0.0098</text><text x="1260 1267 1270 1277 1284 1291" y="471" font-size="12" fill="#000">1.2113</text><text x="1350 1357 1360 1367 1374 1381" y="471" font-size="12" fill="#000">0.4828</text><text x="990" y="131" font-size="12" fill="#000">X</text><text x="1080 1090 1097 1104 1110 1117 1121 1128" y="131" font-size="12" fill="#000">Measured</text><text x="1170 1179 1186 1192 1195 1202 1209 1216" y="131" font-size="12" fill="#000">Residual</text><text x="1260 1268 1274 1278 1285 1292" y="131" font-size="12" fill="#000">Scrape</text><text x="1350 1358 1365 1368" y="131" font-size="12" fill="#000">Shim</text><text x="982 992 999 1006 1013 1020 1025" y="63" font-size="12" font-weight="bold" fill="#000">Measure</text><text x="1038 1051 1064 1071 1084 1097 1110" y="101" font-size="24" fill="#000">93.8248</text><text x="1207 1214 1221 1225" y="97" font-size="12" fill="#000">Zero</text><text x="1265 1275 1282 1289 1295 1302 1306" y="97" font-size="12" fill="#000">Measure</text><text x="1131 1140 1143 1150 1157" y="565" font-size="12" fill="#000">Clear</text><text x="1193 1202 1209 1216 1222 1225 1228 1235 1238 1244 1247 1250 1257 1264 1271 1278 1282" y="565" font-size="12" fill="#000">Copy to clipboard</text><text x="1158 1166 1173 1179 1186 1189 1196 1199" y="758" font-size="12" fill="#000">Absolute</text><text x="1233 1242 1249 1255 1258 1265 1272 1279" y="758" font-size="12" fill="#000">Residual</text><text x="992 999 1002" y="613" font-size="12" font-weight="bold" fill="#000">0.5</text><text x="1002" y="641" font-size="12" font-weight="bold" fill="#000">0</text><text x="988 992 999 1002" y="669" font-size="12" font-weight="bold" fill="#000">-0.5</text><text x="998 1002" y="697" font-size="12" font-weight="bold" fill="#000">-1</text><text x="1035" y="729" font-size="12" font-weight="bold" fill="#000">0</text><text x="1128" y="729" font-size="12" font-weight="bold" fill="#000">5</text><text x="1218.5 1225.5" y="729" font-size="12" font-weight="bold" fill="#000">10</text><text x="1311.5 1318.5" y="729" font-size="12" font-weight="bold" fill="#000">15</text><text x="1404.5 1411.5" y="729" font-size="12" font-weight="bold" fill="#000">20</text><text x="29 38 43 51 56 64 69 77 86 94 102" y="19" font-size="14" font-weight="bold" fill="#d4d0c8">Preferences</text><text x="9 12 19 25 32 36 39 48 52 59 65 71 77 84 87" y="39" font-size="12" fill="#fff">invertGreyscale</text><text x="9 15 22 32 39 42 49 55 62 69 77 83 90 94 101 108" y="55" font-size="12" fill="#000">samplesToAverage</text><text x="225 232" y="55" font-size="12" fill="#000">10</text><text x="9 15 25 32 39 42 49 52 59 66 73 80 86 89 96" y="71" font-size="12" fill="#000">smoothingFactor</text><text x="225" y="71" font-size="12" fill="#000">1</text><text x="9 16 26 34 41 45 53 56 62 69" y="87" font-size="12" fill="#000">umPerPixel</text><text x="225 232 235" y="87" font-size="12" fill="#000">1.0</text><g fill="#1e1e1e"><rect x="4" y="41" width="431" height="1"/><rect x="4" y="57" width="431" height="1"/><rect x="4" y="73" width="431" height="1"/></g></svg>
</body></html>
